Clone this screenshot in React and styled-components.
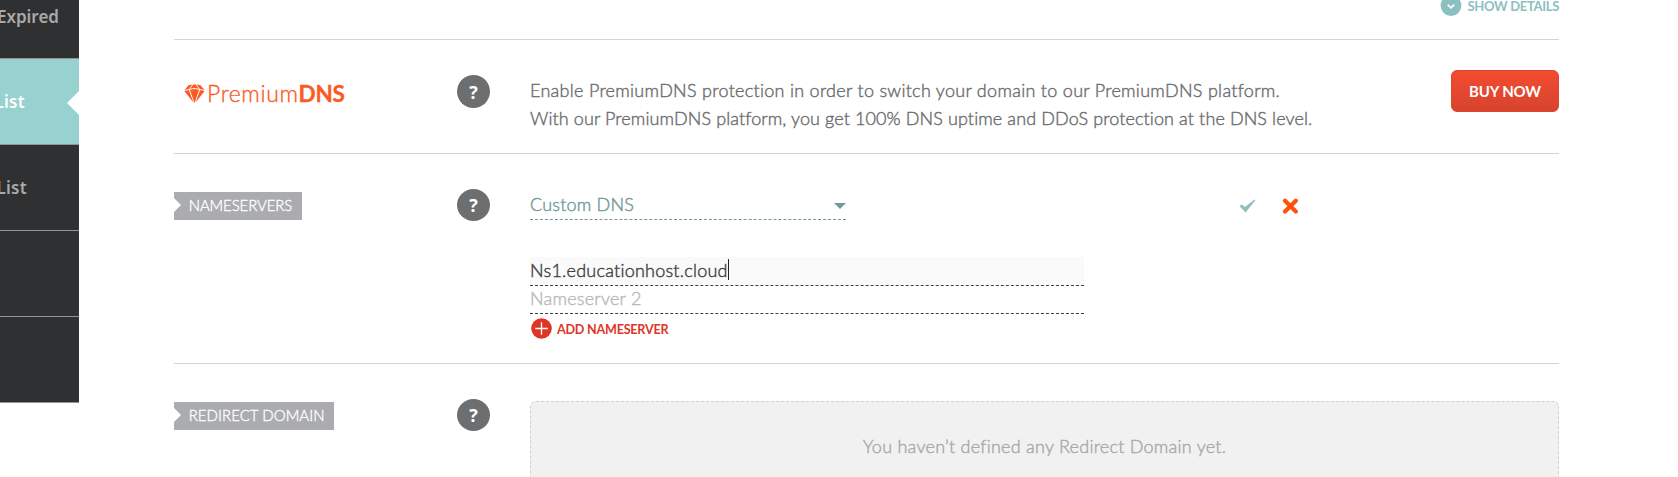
import React from "react";
import styled, { createGlobalStyle } from "styled-components";

const Global = createGlobalStyle`
  * { box-sizing: border-box; }
  body { margin: 0; background: #fff; overflow: hidden; font-family: Lato, "Open Sans", sans-serif; color: #6d6e70; }
`;

const Page = styled.div`
  display: flex;
  width: 1678px;
  height: 477px;
  overflow: hidden;
`;

const Sidebar = styled.nav`
  width: 79px;
  flex: none;
`;

const NavItem = styled.a`
  display: flex;
  align-items: center;
  justify-content: flex-end;
  position: relative;
  height: ${(p) => p.$height || 86}px;
  padding: ${(p) => p.$pad || "0"};
  border-bottom: 1px solid #939393;
  background: ${(p) => (p.$active ? "#97d2d0" : "#2f3031")};
  color: ${(p) => (p.$active ? "#fff" : "#a9a9a9")};
  font: 600 17px/24px "Noto Sans", sans-serif;
  letter-spacing: ${(p) => p.$spacing || 0}px;
  overflow: hidden;
`;

const Pointer = styled.span`
  position: absolute;
  right: 0;
  top: 32px;
  border: 12px solid transparent;
  border-left: 0;
  border-right-color: #fff;
`;

const Main = styled.main`
  width: 1385px;
  margin-left: 95px;
`;

const DetailsBar = styled.div`
  display: flex;
  justify-content: flex-end;
  align-items: flex-start;
  height: 39px;
`;

const DetailsLink = styled.a`
  display: flex;
  align-items: center;
  gap: 6px;
  height: 22px;
  margin-top: -5px;
  color: #8bbfc0;
  font-weight: 700;
  font-size: 13px;
  line-height: 22px;
  letter-spacing: -0.31px;
`;

const Row = styled.section`
  display: flex;
  align-items: flex-start;
  height: ${(p) => p.$height}px;
  border-top: 1px solid #d3d4d5;
`;

const LabelCell = styled.div`
  width: 283px;
  flex: none;
  padding-top: ${(p) => p.$top}px;
`;

const HelpCell = styled.div`
  width: 73px;
  flex: none;
  padding-top: 35px;
`;

const Help = styled.span`
  display: flex;
  align-items: center;
  justify-content: center;
  width: 33px;
  height: ${(p) => p.$height || 33}px;
  border-radius: 50%;
  background: #6d6e70;
  color: #fff;
  font: 700 18px/1 "Open Sans", sans-serif;
`;

const Brand = styled.div`
  display: flex;
  align-items: center;
  gap: 2px;
  height: 26px;
  padding-left: 10px;
  color: #fb5a26;
  font-size: 23px;
  font-weight: 300;
  line-height: 26px;
  letter-spacing: 0.6px;
  -webkit-text-stroke: 0.35px;
  b { font-size: 22.5px; font-weight: 700; letter-spacing: -0.2px; }
`;

const Tag = styled.span`
  display: block;
  position: relative;
  width: ${(p) => p.$width}px;
  height: 28px;
  padding-left: 14.7px;
  background: #abacb0;
  color: #fff;
  font-size: 15px;
  font-weight: 300;
  line-height: 26px;
  letter-spacing: ${(p) => p.$spacing}px;
  -webkit-text-stroke: 0.35px;
  white-space: nowrap;
  &::before {
    content: "";
    position: absolute;
    left: 0;
    top: 6px;
    border: 7px solid transparent;
    border-right: 0;
    border-left-color: #fff;
  }
`;

const Copy = styled.div`
  flex: 1;
  padding-top: 36px;
  font-size: 18px;
  line-height: 28px;
`;

const Line = styled.span`
  display: block;
  width: fit-content;
  font-weight: 300;
  letter-spacing: ${(p) => p.$spacing || 0}px;
  white-space: nowrap;
  -webkit-text-stroke: 0.42px;
`;

const BuyButton = styled.button`
  width: 108px;
  height: 42px;
  margin-top: 30px;
  padding: 0;
  border: 1px solid #e0452c;
  border-radius: 6px;
  background: linear-gradient(#f24d31, #d7432e);
  color: #fff;
  font: 700 15px/39px Lato, sans-serif;
  letter-spacing: -0.14px;
`;

const Fields = styled.div`
  width: 554px;
  padding-top: 37px;
`;

const Select = styled.div`
  display: flex;
  align-items: center;
  justify-content: space-between;
  width: 316px;
  height: 29px;
  padding-bottom: 2px;
  border-bottom: 1px dashed #6f9a98;
  color: #6f9a98;
  font-size: 18px;
  line-height: 22px;
`;

const Caret = styled.span`
  margin-top: 3px;
  border: 6px solid transparent;
  border-top-color: #6f9a98;
  border-bottom: 0;
`;

const Inputs = styled.div`
  margin-top: 37px;
`;

const Field = styled.div`
  display: flex;
  align-items: center;
  height: ${(p) => p.$height}px;
  padding-bottom: ${(p) => p.$inset}px;
  border-bottom: 1px dashed #3f4042;
  background: ${(p) => (p.$focused ? "#fafafa" : "transparent")};
  color: ${(p) => (p.$focused ? "#3f4042" : "#b9b9bb")};
  font-size: 18px;
  line-height: 22px;
`;

const TextCursor = styled.i`
  width: 1px;
  height: 21px;
  background: #222;
`;

const AddLink = styled.a`
  display: flex;
  align-items: center;
  gap: 5px;
  height: 21px;
  margin-top: 4px;
  padding-left: 1px;
  color: #dd3627;
  font-weight: 700;
  font-size: 12.6px;
  letter-spacing: -0.24px;
  white-space: nowrap;
  span { padding-top: 1px; }
`;

const Actions = styled.div`
  display: flex;
  align-items: center;
  gap: 26px;
  height: 18px;
  margin: 43px 0 0 154.5px;
`;

const EmptyBox = styled.div`
  display: flex;
  flex: 1;
  justify-content: center;
  height: 100px;
  margin-top: 37px;
  padding-top: 30px;
  border: 1px dashed #cfcfcf;
  border-radius: 6px;
  background: #f1f1f1;
  color: #a7a9ac;
  font-size: 18px;
  line-height: 28px;
`;

const Chevron = () => (
  <svg width="22" height="22" viewBox="0 0 22 22">
    <circle cx="11" cy="10.6" r="10.4" fill="#8bbfc0" />
    <path d="M7.7 9.6 11 12.8l3.3-3.2" fill="none" stroke="#fff" strokeWidth="1.7" />
  </svg>
);

const Diamond = () => (
  <svg width="21" height="20" viewBox="0 -1 20 20" preserveAspectRatio="none" fill="#fb5a26">
    <path d="M4.3 1.2 7.9.6 5 5.1.5 6.1ZM8.6.6h2.8l2.6 4.2-4-.7-4 .7ZM12.1.6l3.6.6 3.9 4.9-4.6-1ZM.3 7l4.4-.9 4.3 12.5ZM5.6 5.8l4.4-.8 4.4.8L10 19.2ZM15.3 6.1l4.4.9-8.7 11.6Z" />
  </svg>
);

const Plus = () => (
  <svg width="21" height="21" viewBox="0 0 21 21">
    <circle cx="10.5" cy="10.5" r="10.3" fill="#dd3627" />
    <path d="M10.5 4.2v12.6M4.2 10.5h12.6" stroke="#fff" strokeWidth="1.3" />
  </svg>
);

const Check = () => (
  <svg width="17" height="14" viewBox="0 0 17 14">
    <path d="M.6 7.3 2.7 5.6 5.9 8 15.6.4l.7.8L6.6 13.6Z" fill="#8bbfc0" />
  </svg>
);

const Cross = () => (
  <svg width="17" height="17" viewBox="0 0 17 17">
    <path d="m3 2.8 10.8 10.8M13.8 2.8 3 13.6" stroke="#ff5208" strokeWidth="4.2" strokeLinecap="round" />
  </svg>
);

export default function App() {
  return (
    <>
      <Global />
      <Page>
        <Sidebar>
          <NavItem $height={59} $pad="0 20px 24px 0">Expired</NavItem>
          <NavItem $active $spacing={0.3} $pad="1px 54px 0 0">List<Pointer /></NavItem>
          <NavItem $spacing={0.3} $pad="1px 52px 0 0">List</NavItem>
          <NavItem />
          <NavItem />
        </Sidebar>
        <Main>
          <DetailsBar>
            <DetailsLink><Chevron /><span>SHOW DETAILS</span></DetailsLink>
          </DetailsBar>
          <Row $height={114}>
            <LabelCell $top={40}><Brand><Diamond /><span>Premium<b>DNS</b></span></Brand></LabelCell>
            <HelpCell><Help>?</Help></HelpCell>
            <Copy>
              <Line $spacing={0.29}>Enable PremiumDNS protection in order to switch your domain to our PremiumDNS platform.</Line>
              <Line $spacing={0.108}>With our PremiumDNS platform, you get 100% DNS uptime and DDoS protection at the DNS level.</Line>
            </Copy>
            <BuyButton>BUY NOW</BuyButton>
          </Row>
          <Row $height={210}>
            <LabelCell $top={38}><Tag $width={128} $spacing={-0.12}>NAMESERVERS</Tag></LabelCell>
            <HelpCell><Help $height={32}>?</Help></HelpCell>
            <Fields>
              <Select><Line $spacing={0.2}>Custom DNS</Line><Caret /></Select>
              <Inputs>
                <Field $height={29} $inset={3} $focused><Line $spacing={0.236}>Ns1.educationhost.cloud</Line><TextCursor /></Field>
                <Field $height={28} $inset={4}><Line $spacing={0.24}>Nameserver 2</Line></Field>
              </Inputs>
              <AddLink><Plus /><span>ADD NAMESERVER</span></AddLink>
            </Fields>
            <Actions><Check /><Cross /></Actions>
          </Row>
          <Row $height={140}>
            <LabelCell $top={38}><Tag $width={160} $spacing={0.05}>REDIRECT DOMAIN</Tag></LabelCell>
            <HelpCell><Help $height={32}>?</Help></HelpCell>
            <EmptyBox><Line $spacing={0.256}>You haven’t defined any Redirect Domain yet.</Line></EmptyBox>
          </Row>
        </Main>
      </Page>
    </>
  );
}
